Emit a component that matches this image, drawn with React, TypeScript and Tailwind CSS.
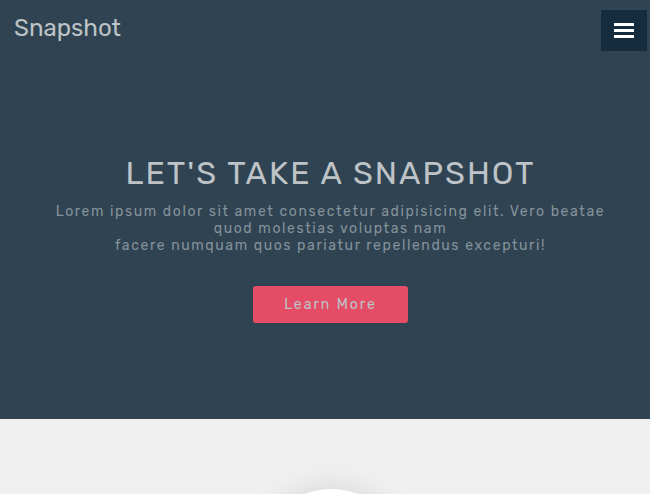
function MenuButton() {
  return (
    <button
      type="button"
      aria-label="Open menu"
      className="flex h-[41px] w-[46px] flex-col items-center justify-center gap-[3px] bg-[#152c3f]"
    >
      <span className="h-[3px] w-5 bg-white" />
      <span className="h-[3px] w-5 bg-white" />
      <span className="h-[3px] w-5 bg-white" />
    </button>
  );
}

export default function App() {
  return (
    <div className="h-screen overflow-hidden bg-[#f0f0f0] font-[Rubik,Roboto,sans-serif]">
      <div className="bg-[#304352] pb-24 text-[#bdc3c7]">
        <header className="flex items-start justify-between pt-[10px] pr-[3px] pl-[14px]">
          <a href="#home" className="text-2xl leading-[36px]">
            Snapshot
          </a>
          <MenuButton />
        </header>
        <main className="flex flex-col items-center pt-[103px] pr-10 pl-[51px] text-center">
          <h1 className="text-[32px] leading-[38px] tracking-[2px] uppercase">
            Let's take a snapshot
          </h1>
          <p className="mt-[11px] text-sm leading-[17px] tracking-[0.1rem] text-[#84929a]">
            Lorem ipsum dolor sit amet consectetur adipisicing elit. Vero beatae quod molestias
            voluptas nam
            <br />
            facere numquam quos pariatur repellendus excepturi!
          </p>
          <button
            type="button"
            className="mt-8 h-[37px] w-[155px] rounded-[3px] bg-[#e44d65] text-sm tracking-[2px]"
          >
            Learn More
          </button>
        </main>
      </div>
      <section className="flex justify-center pt-[70px] pl-[11px]">
        <div className="size-[150px] rounded-full bg-white shadow-[0_0_30px_rgba(0,0,0,0.12)]" />
      </section>
    </div>
  );
}
